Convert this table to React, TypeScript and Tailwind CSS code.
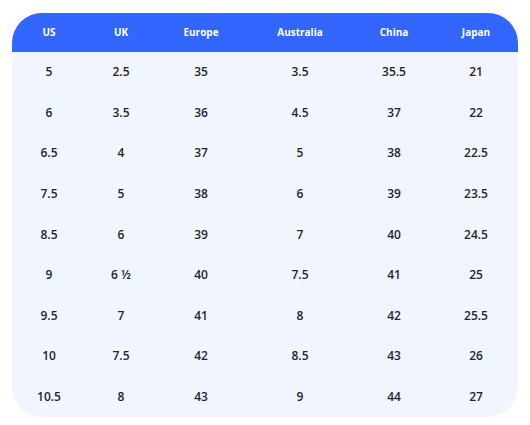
const headers = [
  { label: "US", width: "w-[74px]" },
  { label: "UK", width: "w-[70px]" },
  { label: "Europe", width: "w-[90px]" },
  { label: "Australia", width: "w-[108px]" },
  { label: "China", width: "w-[80px]" },
  { label: "Japan", width: "w-[84px]" },
]

const rows = [
  ["5", "2.5", "35", "3.5", "35.5", "21"],
  ["6", "3.5", "36", "4.5", "37", "22"],
  ["6.5", "4", "37", "5", "38", "22.5"],
  ["7.5", "5", "38", "6", "39", "23.5"],
  ["8.5", "6", "39", "7", "40", "24.5"],
  ["9", "6 ½", "40", "7.5", "41", "25"],
  ["9.5", "7", "41", "8", "42", "25.5"],
  ["10", "7.5", "42", "8.5", "43", "26"],
  ["10.5", "8", "43", "9", "44", "27"],
]

export default function App() {
  return (
    <div className="w-[530px] h-[425px] bg-white pt-[13px] pl-[12px] font-['Open_Sans',sans-serif]">
      <div className="w-[506px] rounded-[30px] overflow-hidden bg-[#f1f6fe]">
        <div className="flex h-[39px] items-center bg-[#3366ff] text-white text-[10px] font-bold">
          {headers.map((h) => (
            <div key={h.label} className={`${h.width} text-center`}>
              {h.label}
            </div>
          ))}
        </div>
        {rows.map((row, i) => (
          <div key={i} className="flex h-[40.6px] items-center text-[12px] font-semibold text-[#232334]">
            {row.map((cell, j) => (
              <div key={j} className={`${headers[j].width} text-center`}>
                {cell}
              </div>
            ))}
          </div>
        ))}
      </div>
    </div>
  )
}
